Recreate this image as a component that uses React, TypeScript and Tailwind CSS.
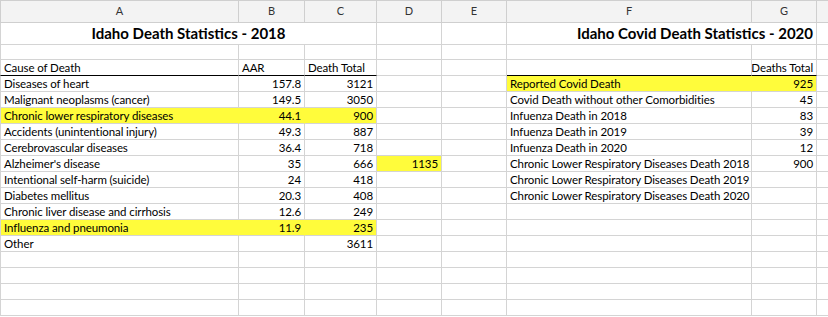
import React from "react";

type CellDef = {
  text?: string;
  align?: "left" | "right" | "center";
  span?: number;
  yellow?: boolean;
  bold?: boolean;
  thick?: boolean; // black line under header row
  joinRight?: boolean; // hide gridline to the right (filled neighbour)
};

const LETTERS = ["A", "B", "C", "D", "E", "F", "G", ""];

const left: [string, string, string, boolean][] = [
  ["Diseases of heart", "157.8", "3121", false],
  ["Malignant neoplasms (cancer)", "149.5", "3050", false],
  ["Chronic lower respiratory diseases", "44.1", "900", true],
  ["Accidents (unintentional injury)", "49.3", "887", false],
  ["Cerebrovascular diseases", "36.4", "718", false],
  ["Alzheimer's disease", "35", "666", false],
  ["Intentional self-harm (suicide)", "24", "418", false],
  ["Diabetes mellitus", "20.3", "408", false],
  ["Chronic liver disease and cirrhosis", "12.6", "249", false],
  ["Influenza and pneumonia", "11.9", "235", true],
  ["Other", "", "3611", false],
];

const right: [string, string, boolean][] = [
  ["Reported Covid Death", "925", true],
  ["Covid Death without other Comorbidities", "45", false],
  ["Infuenza Death in 2018", "83", false],
  ["Infuenza Death in 2019", "39", false],
  ["Infuenza Death in 2020", "12", false],
  ["Chronic Lower Respiratory Diseases Death 2018", "900", false],
  ["Chronic Lower Respiratory Diseases Death 2019", "", false],
  ["Chronic Lower Respiratory Diseases Death 2020", "", false],
];

function Cell({ c, first }: { c: CellDef; first?: boolean }) {
  const span =
    c.span === 3 ? "col-span-3" : c.span === 2 ? "col-span-2" : "col-span-1";
  const align =
    c.align === "right"
      ? "justify-end text-right"
      : c.align === "center"
      ? "justify-center text-center"
      : "justify-start";
  return (
    <div
      className={[
        span,
        align,
        "flex items-center overflow-hidden whitespace-nowrap px-[3px] border-r border-b",
        first ? "border-l" : "",
        c.yellow ? "bg-[#fffc3b]" : "",
        c.joinRight ? "border-r-transparent" : "border-r-[#d4d4d4]",
        c.thick ? "border-b-black" : "border-b-[#d4d4d4]",
        "border-l-[#d4d4d4]",
        c.bold ? "text-[15px] font-bold" : "text-[11.5px] tracking-[-0.1px]",
      ].join(" ")}
    >
      {c.text}
    </div>
  );
}

function buildRows(): CellDef[][] {
  const rows: CellDef[][] = [];
  rows.push([
    { text: "Idaho Death Statistics - 2018", span: 3, align: "center", bold: true },
    {},
    {},
    { text: "Idaho Covid Death Statistics - 2020", span: 2, align: "right", bold: true },
    {},
  ]);
  rows.push([{}, {}, {}, {}, {}, {}, {}, {}]);
  rows.push([
    { text: "Cause of Death", thick: true },
    { text: "AAR", thick: true },
    { text: "Death Total", thick: true },
    {},
    {},
    { thick: true },
    { text: "Deaths Total", align: "right", thick: true },
    {},
  ]);
  for (let i = 0; i < 15; i++) {
    const l = left[i];
    const r = right[i];
    const ly = l ? l[3] : false;
    const ry = r ? r[2] : false;
    rows.push([
      { text: l?.[0], yellow: ly, joinRight: ly },
      { text: l?.[1], align: "right", yellow: ly, joinRight: ly },
      { text: l?.[2], align: "right", yellow: ly },
      i === 5 ? { text: "1135", align: "right", yellow: true } : {},
      {},
      { text: r?.[0], yellow: ry, joinRight: ry },
      { text: r?.[1], align: "right", yellow: ry },
      {},
    ]);
  }
  return rows;
}

export default function App() {
  const rows = buildRows();
  return (
    <div
      className="w-[828px] h-[317px] overflow-hidden bg-white text-black"
      style={{ fontFamily: "Lato, 'Liberation Sans', sans-serif" }}
    >
      <div className="grid grid-cols-[239px_66px_72px_65px_65px_245px_65px_40px] grid-rows-[23px_22px_15px_16px_repeat(15,16px)]">
        {LETTERS.map((l, i) => (
          <div
            key={l + i}
            className={
              "flex items-center justify-center border-t border-r border-b border-[#cfcfcf] bg-[#f3f3f3] text-[11px] text-[#333] " +
              (i === 0 ? "border-l" : "")
            }
          >
            {l}
          </div>
        ))}
        {rows.map((row, ri) =>
          row.map((c, ci) => <Cell key={ri + "-" + ci} c={c} first={ci === 0} />)
        )}
      </div>
    </div>
  );
}
